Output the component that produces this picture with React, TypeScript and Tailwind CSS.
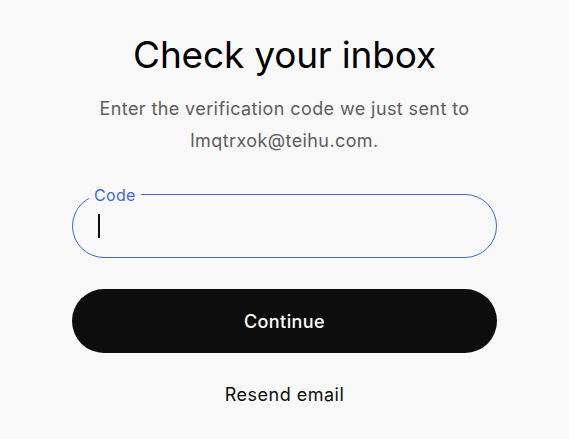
export default function App() {
  return (
    <div
      className="min-h-screen w-full bg-[#f9f9f9] text-[#0d0d0d]"
      style={{ fontFamily: "Inter, 'Noto Sans', sans-serif" }}
    >
      <main className="mx-auto flex w-[425px] flex-col items-center pt-[31px]">
        <h1 className="text-[37px] leading-[48px] font-normal tracking-[-0.005em] text-black">
          Check your inbox
        </h1>
        <p className="mt-[14px] text-center text-[18px] leading-[32px] tracking-[0.4px] text-[#5d5d5d]">
          Enter the verification code we just sent to
          <br />
          lmqtrxok@teihu.com.
        </p>

        {/* code field with floating label */}
        <div className="relative mt-[37px] w-full">
          <label className="absolute -top-[9px] left-[17px] bg-[#f9f9f9] px-[5px] text-[16px] leading-[20px] tracking-[0.3px] text-[#3e68d8]">
            Code
          </label>
          <div className="flex h-[64px] w-full items-center rounded-full border border-[#3e68d8] pl-[25px]">
            <span className="h-[24px] w-[2px] bg-[#0d0d0d]" />
          </div>
        </div>

        <button className="mt-[31px] flex h-[64px] w-full items-center justify-center rounded-full bg-[#0d0d0d] text-[18px] font-medium tracking-[0.4px] text-white">
          Continue
        </button>

        <button className="mt-[24px] text-[18px] leading-[36px] tracking-[0.5px] text-[#0d0d0d]">
          Resend email
        </button>
      </main>
    </div>
  );
}
